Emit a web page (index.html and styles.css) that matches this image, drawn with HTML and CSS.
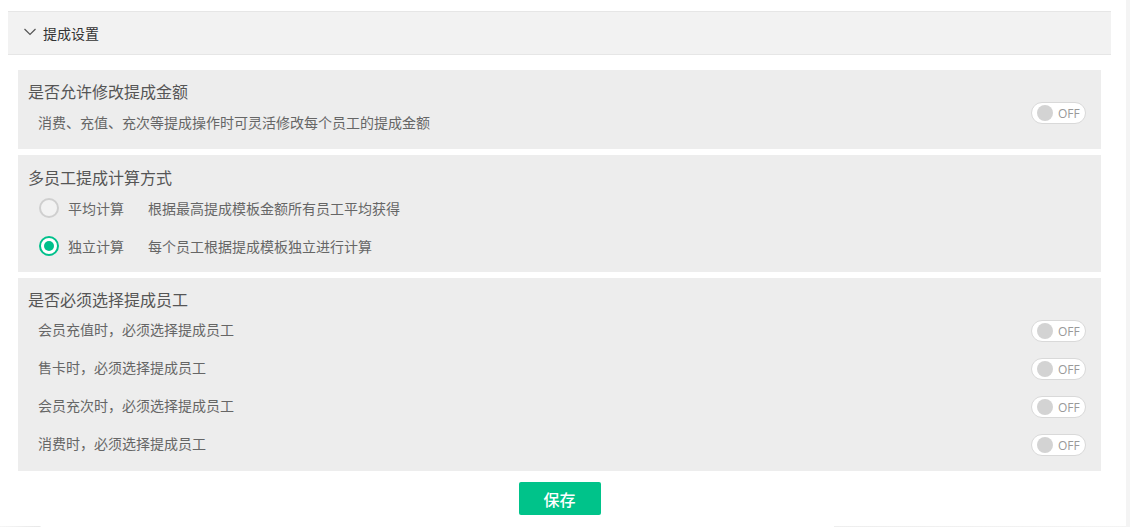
FILE: index.html
```html
<!DOCTYPE html>
<html lang="zh-CN">
<head>
<meta charset="UTF-8">
<meta name="viewport" content="width=device-width, initial-scale=1.0">
<title>提成设置</title>
<link rel="stylesheet" href="styles.css">
</head>
<body>
<div class="page">
<div class="main">
  <div class="panel">
    <div class="panel-head">
      <svg class="chevron" width="12" height="8" viewBox="0 0 12 8"><polyline points="0.5,1 6,6.5 11.5,1" fill="none" stroke="#555" stroke-width="1.2"/></svg>
      <span>提成设置</span>
    </div>
    <div class="panel-body">

      <!-- 修改提成金额 -->
      <div class="card card-flex">
        <div class="card-left">
          <div class="card-title">是否允许修改提成金额</div>
          <div class="card-desc">消费、充值、充次等提成操作时可灵活修改每个员工的提成金额</div>
        </div>
        <div class="switch switch-first"><i class="knob"></i><span>OFF</span></div>
      </div>

      <!-- 计算方式 -->
      <div class="card card-calc">
        <div class="card-title">多员工提成计算方式</div>
        <div class="radio-row">
          <i class="radio"></i>
          <span class="radio-label">平均计算</span>
          <span class="radio-desc">根据最高提成模板金额所有员工平均获得</span>
        </div>
        <div class="radio-row">
          <i class="radio checked"></i>
          <span class="radio-label">独立计算</span>
          <span class="radio-desc">每个员工根据提成模板独立进行计算</span>
        </div>
      </div>

      <!-- 必须选择员工 -->
      <div class="card card-staff">
        <div class="card-title">是否必须选择提成员工</div>
        <div class="switch-row">
          <span>会员充值时，必须选择提成员工</span>
          <div class="switch"><i class="knob"></i><span>OFF</span></div>
        </div>
        <div class="switch-row">
          <span>售卡时，必须选择提成员工</span>
          <div class="switch"><i class="knob"></i><span>OFF</span></div>
        </div>
        <div class="switch-row">
          <span>会员充次时，必须选择提成员工</span>
          <div class="switch"><i class="knob"></i><span>OFF</span></div>
        </div>
        <div class="switch-row">
          <span>消费时，必须选择提成员工</span>
          <div class="switch"><i class="knob"></i><span>OFF</span></div>
        </div>
      </div>
    </div>
    <div class="actions">
      <button class="btn-save">保存</button>
    </div>
  </div>
  <div class="foot-line"></div>
</div>
<div class="track"></div>
</div>
</body>
</html>
```

FILE: styles.css
```css
* {
  box-sizing: border-box;
}

body {
  margin: 0;
  background: #fff;
  font-family: "Noto Sans CJK SC", "Microsoft YaHei", sans-serif;
  font-size: 14px;
  color: #666;
}

.page {
  display: flex;
  height: 527px;
  overflow: hidden;
}

.main {
  flex: 1;
  display: flex;
  flex-direction: column;
}

.track {
  width: 4px;
  background: #f4f4f4;
}

.panel {
  margin: 11px 15px 0 8px;
}

/* 标题栏 */
.panel-head {
  height: 44px;
  display: flex;
  align-items: center;
  padding-left: 16px;
  background: #f2f2f2;
  border-top: 1px solid #e6e6e6;
  border-bottom: 1px solid #e6e6e6;
  color: #333;
}

.chevron {
  margin-right: 7px;
  margin-top: -2px;
}

.panel-body {
  padding: 15px 10px 0;
}

.card {
  background: #ededed;
  padding: 10px 15px 9px 10px;
  margin-bottom: 6px;
}

.card-title {
  font-size: 16px;
  line-height: 22px;
  color: #555;
}

.card-desc {
  line-height: 22px;
  margin-top: 9px;
  padding-left: 10px;
  padding-bottom: 7px;
}

.card-flex {
  display: flex;
  align-items: center;
}

.card-left {
  flex: 1;
}

.switch-first {
  margin-top: 5px;
}

/* 开关 */
.switch {
  width: 55px;
  height: 22px;
  border: 1px solid #d9d9d9;
  border-radius: 11px;
  background: #fff;
  display: flex;
  align-items: center;
  padding-left: 5px;
}

.knob {
  width: 16px;
  height: 16px;
  border-radius: 50%;
  background: #d3d3d3;
}

.switch span {
  font-family: "Open Sans", "Noto Sans", sans-serif;
  font-size: 12px;
  color: #999;
  margin-left: 5px;
  margin-top: 1px;
}

/* 单选 */
.card-calc {
  padding-top: 11px;
  padding-bottom: 11px;
}

.radio-row {
  height: 30px;
  display: flex;
  align-items: center;
  padding-left: 11px;
  margin-top: 8px;
}

.radio-row:nth-child(2) {
  margin-top: 5px;
}

.radio {
  width: 20px;
  height: 20px;
  border-radius: 50%;
  border: 2px solid #cfcfcf;
  background: #f2f2f2;
  display: flex;
  align-items: center;
  justify-content: center;
}

.radio.checked {
  border-color: #00c08b;
  background: #fff;
}

.radio.checked::after {
  content: "";
  width: 10px;
  height: 10px;
  border-radius: 50%;
  background: #00c08b;
}

.radio-label {
  width: 80px;
  margin-left: 9px;
}

.card-staff {
  padding-bottom: 9px;
}

.switch-row {
  height: 38px;
  display: flex;
  align-items: center;
  justify-content: space-between;
  padding-left: 10px;
}

.switch-row .switch {
  margin-top: 3px;
}

.actions {
  display: flex;
  justify-content: center;
  padding-top: 5px;
}

.btn-save {
  width: 82px;
  height: 33px;
  border: none;
  border-radius: 2px;
  background: #00c38a;
  color: #fff;
  font-family: inherit;
  font-size: 16px;
  font-weight: 500;
}

.foot-line {
  margin-top: auto;
  height: 1px;
  background: linear-gradient(to right, #f6f6f6 0, #e8e8e8 40px, #fff 41px, #fff 834px, #eee 834px, #f4f4f4 100%);
}
```
